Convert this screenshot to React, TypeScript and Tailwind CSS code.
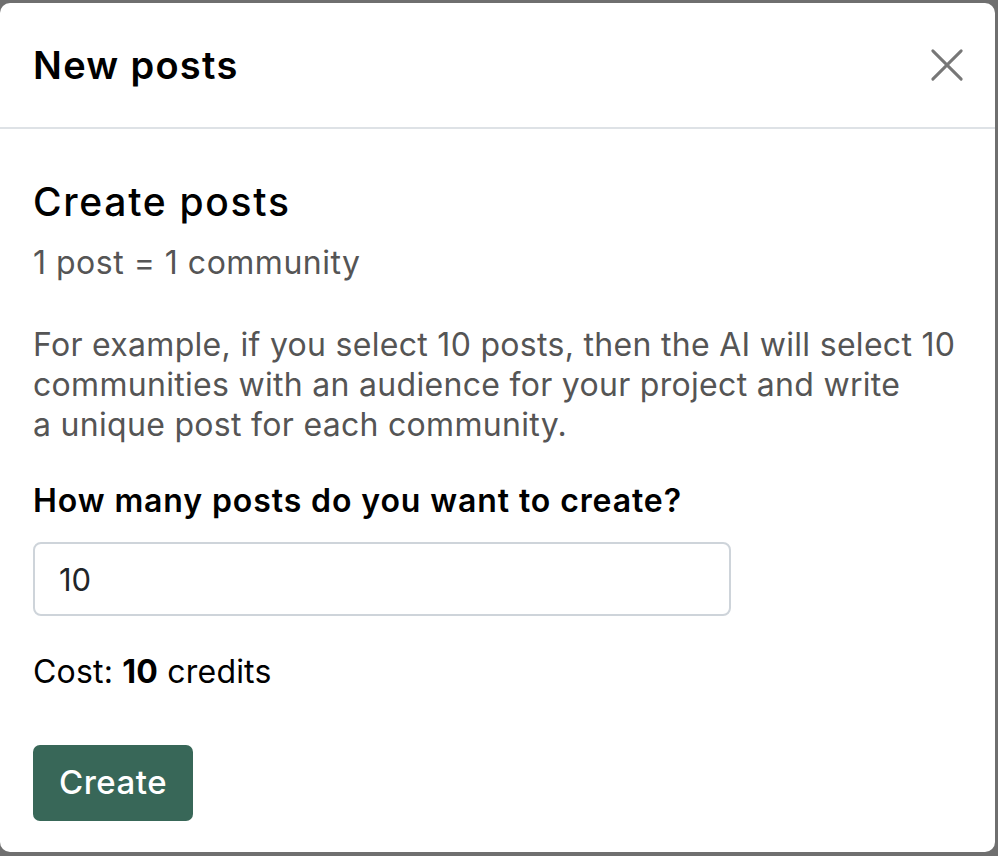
import { useState } from 'react'

export default function App() {
    const [count, setCount] = useState('10')

    return (
        <div className="w-[998px] h-[856px] bg-[#6f6f6f] overflow-hidden pt-[3px]" style={{ fontFamily: '"Inter", "DejaVu Sans", sans-serif' }}>
            {/* Modal */}
            <div className="w-[995px] h-[849px] bg-white rounded-[10px] flex flex-col">
                {/* Header */}
                <div className="h-[126px] flex items-center justify-between pl-[33px] pr-[30px] border-b-2 border-[#dee2e6] shrink-0">
                    <h2 className="text-[38px] font-semibold text-black leading-none tracking-[1.3px]">New posts</h2>
                    <button className="w-[36px] h-[36px] flex items-center justify-center text-[#777]">
                        <svg className="w-[34px] h-[34px]" viewBox="0 0 24 24" fill="none" stroke="currentColor" strokeWidth="2.1" strokeLinecap="round">
                            <path d="M2 2l20 20M22 2L2 22" />
                        </svg>
                    </button>
                </div>

                {/* Body */}
                <div className="px-[33px] pt-[49px] flex flex-col">
                    <h3 className="text-[39px] font-medium text-black leading-[48px] tracking-[1.7px]">Create posts</h3>
                    <p className="mt-[17px] text-[32px] text-[#555] leading-[40px] tracking-[0.5px]">1 post = 1 community</p>
                    <p className="mt-[42px] text-[32px] text-[#555] leading-[40px] tracking-[0.3px]">
                        For example, if you select 10 posts, then the AI will select 10 communities with an audience for your project and write<br />
                        a unique post for each community.
                    </p>

                    <label className="mt-[36px] text-[32px] font-semibold text-black leading-[40px] tracking-[0.9px]">How many posts do you want to create?</label>
                    <input
                        value={count}
                        onChange={(e) => setCount(e.target.value)}
                        className="mt-[21px] w-[698px] h-[74px] px-[24px] text-[31px] text-[#212529] border-2 border-[#ced4da] rounded-[8px] outline-none"
                    />

                    <p className="mt-[36px] text-[32px] text-black leading-[40px] tracking-[0.2px]">
                        Cost: <span className="font-bold">10</span> credits
                    </p>

                    <div className="mt-[53px]">
                        <button className="w-[160px] h-[76px] bg-[#386758] text-white text-[33px] font-medium rounded-[7px] tracking-[0.5px]">Create</button>
                    </div>
                </div>
            </div>
        </div>
    )
}
